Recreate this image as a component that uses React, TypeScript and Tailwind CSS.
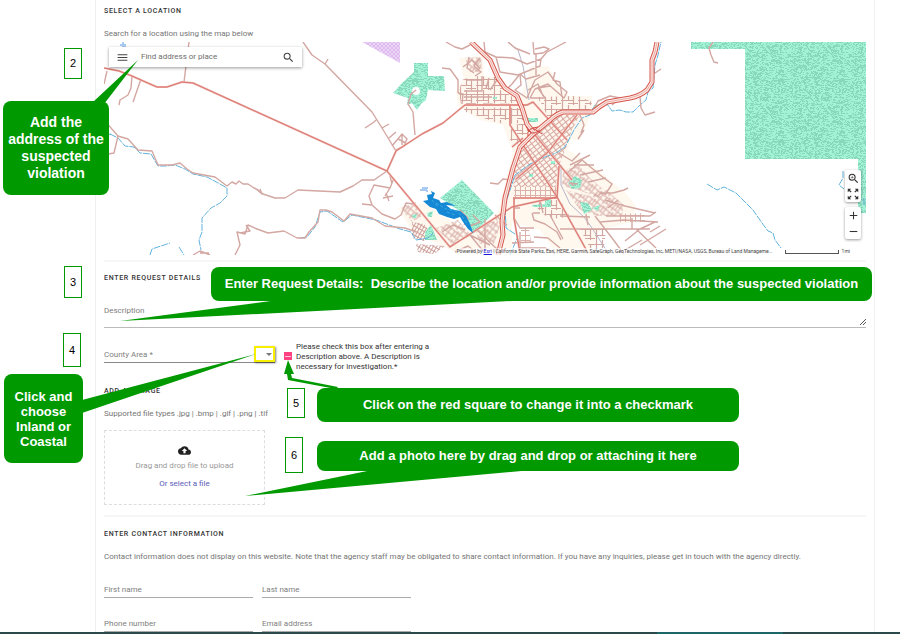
import type { ReactNode } from 'react';
import { MdAdd, MdCloudUpload, MdMenu, MdRemove, MdSearch, MdZoomIn, MdZoomOutMap } from 'react-icons/md';

// short 1px strokes scattered over a tile, used as the speckle in parks
function speckle(size: number, count: number) {
    let seed = 7;
    const next = () => {
        seed = (seed * 16807) % 2147483647;
        return seed % size;
    };
    let d = '';
    for (let i = 0; i < count; i++) {
        d += `M${next()} ${next() + 0.5}h${1 + (next() % 2)}`;
    }
    return d;
}

const cream = [
    'M459 58L483 56L484 76L496 76L503 86L520 98L527 80L530 66L548 66L558 84L569 96L592 96L592 110L588 122L580 140L570 140L568 150L582 158L600 172L625 192L636 206L632 222L600 230L590 252L555 252L540 230L512 222L512 252L455 252L462 240L480 228L498 212L506 180L513 152L508 140L503 125L480 120L458 106L456 92L464 78Z',
    'M398 208L425 203L440 215L465 228L480 238L455 252L430 240L415 236Z'
];

const districts = [
    { d: 'M462 80L473 76L495 77L503 90L520 103L461 104L459 92Z', fill: 'url(#ortho)' },
    { d: 'M462 107L524 108L529 122L510 124L498 123L478 116L466 112Z', fill: 'url(#ortho)' },
    { d: 'M465 58L481 57L482 72L470 72Z', fill: 'url(#diag)' },
    { d: 'M537 97L578 96L592 102L590 110L562 110L548 118L543 106Z', fill: 'url(#ortho)' },
    { d: 'M511 126L524 123L530 130L519 145L510 140Z', fill: 'url(#ortho)' },
    { d: 'M522 146L548 121L562 115L580 115L572 130L566 148L558 168L556 187L514 187L513 180L517 162Z', fill: 'url(#downtown)' },
    { d: 'M514 187L557 187L557 197L514 197Z', fill: 'url(#small)' },
    { d: 'M536 200L560 200L570 217L550 219L538 210Z', fill: 'url(#ortho)' },
    { d: 'M563 172L578 164L590 178L604 190L600 198L578 190L562 186Z', fill: 'url(#diag)' },
    { d: 'M566 190L590 196L606 190L624 205L622 216L598 216L580 210Z', fill: 'url(#diag)' },
    { d: 'M620 214L645 213L645 222L620 222Z', fill: 'url(#small)' },
    { d: 'M580 229L606 229L604 248L590 248Z', fill: 'url(#ortho)' },
    { d: 'M521 228L529 228L531 242L521 242Z', fill: 'url(#small)' },
    { d: 'M412 222L424 224L430 232L424 241L412 238Z', fill: 'url(#dense)' },
    { d: 'M401 206L416 202L422 216L412 222L405 214Z', fill: 'url(#diag)' },
    { d: 'M436 228L458 220L470 234L452 244Z', fill: 'url(#diag)' },
    { d: 'M476 232L496 216L500 226L494 244L480 244Z', fill: 'url(#diag)' },
    { d: 'M416 244L445 246L434 254L418 252Z', fill: 'url(#dense)' }
];

const parks = [
    'M414 63H428V76H444L445 91L428 90L426 100L421 104L417 110L412 103L407 105L408 98L393 93L402 83L414 72Z',
    'M462 180L494 213L473 234L458 210L440 198Z',
    'M691 42H866V213H858V159H745V49H691Z',
    'M568 183L575 176L582 180L580 188L572 189Z',
    'M580 202L588 203L592 210L584 214ZM592 208L600 205L598 211Z',
    'M532 205L545 204L545 199L551 199V207L533 207Z',
    'M527 118L538 118L538 122L528 122Z',
    'M425 232L431 225L437 240L425 240Z',
    'M427 213L433 211L432 217L428 217ZM412 215L417 214L416 218L413 218Z',
    'M493 97h4v2h-4ZM529 174h4v3h-4ZM551 161h4v3h-4ZM594 105l5 -1l-2 4l-4 1Z'
];

const minorRoads = [
    'M303 42L312 55L325 64L372 112L382 128L396 151M325 64L328 59M365 128L374 122L376 120M382 128L389 124M389 138L396 132M392 146L402 134L407 139L404 146L396 150M402 135V145M398 139L406 143',
    'M416 90L411 94L408 104L413 112L415 135',
    'M189 42L184 82M132 76L131 88L128 95L120 100L119 105M141 79L133 102M107 71L104 84',
    'M104 120L118 136L128 139L138 150L152 151L158 165L172 165L180 163L187 169L193 173L215 177L227 186L232 182L236 184L239 181L243 184L248 184L254 188L258 190L263 194L275 198L285 198L298 190L340 192L353 186L362 180L374 180L387 171M118 136L114 153L108 154M255 188L262 194L260 189',
    'M104 158L109 154M193 255L200 251L210 255M235 255L240 245L237 232L245 234L248 225L257 229L268 233L284 231L297 238L305 238L309 232L318 222L320 210L326 210L332 212L344 221L350 214L372 218L385 226L405 228L416 232M246 225L250 231L240 233M200 253L209 253',
    'M394 178L390 188L374 185L369 196L372 205L362 204M372 205L382 214L395 219L401 215L406 203L414 204M383 198L393 196M386 193L389 201M390 188L385 196M390 176L392 184',
    'M442 68L450 69L458 80L458 93M446 42L455 47L462 49L470 45M458 93L463 94L462 104M571 184M570 183L574 186M569 183L578 184',
    'M570 183M484 42L485 52L496 57L500 72L518 75L540 66L541 59L527 64L513 58L496 57M541 59L547 52L566 42M533 42L534 54L543 53L549 49L544 47L535 49M508 42L515 48L530 54M505 91L512 84L520 74L526 79L540 75M536 54V75',
    'M490 183L498 184L503 179L511 180',
    'M520 74L521 85L515 90L527 98L535 80L548 72L557 84L567 92L564 98L548 84L535 89L530 98M555 72L553 80L560 82L562 97M543 96L538 84L528 90M530 98H545L538 88L550 86',
    'M559 153L572 161L580 153M570 165L590 155M574 165L594 165M566 174L582 160L600 175L612 184L605 195M580 175L603 170M588 182L606 178M600 193H613L624 190L628 188M605 200L625 206L655 213M618 200L608 208',
    'M606 216H650L656 212M600 222L624 220L658 222M606 229H650M636 229L656 248M625 241L640 229L655 222M640 245L666 229M650 232L660 226M625 250L642 240M595 216L612 238L624 254M632 218V229M560 229H606M560 216L590 217M586 214L588 225',
    'M532 213L534 220L545 224L557 232L561 240M533 213H540M540 200L543 213M550 215L563 239M514 218L520 228H534M520 232V248H545L555 253M534 237L548 238L560 248M514 208H520M512 243L534 242',
    'M450 246L470 235L484 252M470 235L490 245M455 252L468 246L478 254M442 232L453 225L465 230M460 210L468 218L464 225M473 215L480 222L470 226M485 219V252M495 215L507 225M476 229L498 250',
    'M713 42L709 48L711 55L714 62L718 63M640 97L641 108L645 115L655 112M593 110L598 101L610 96L620 98L612 105M652 75L661 69M580 115L584 125L581 133M584 130L578 139',
    'M480 58L474 66L481 72L475 76M463 67L472 60L480 69M469 57L467 68L474 73M489 78L486 88M497 80L490 90M464 91H482V76M482 80H466M464 97H492'
];

const redRoads = [
    'M104 68L119 71L132 76L150 84L157 87L167 87L182 82L193 83L387 171L450 247L512 207L557 197',
    'M387 171L396 151L422 134L443 123L460 109L465 105L527 105L533 102L567 140',
    'M510 105V125L557 197L588 253',
    'M513 198H557L559 166',
    'M516 179L548 152L577 115',
    'M514 198V218L520 253',
    'M535 135L572 180M512 147L523 138'
];

const highways = [
    'M471 42L490 60L498 78L505 88L517 96L522 108L527 124L534 133',
    'M657 42L655 52L652 60V82L647 90Q640 96 630 98L607 102Q600 106 593 112H563Q556 114 550 120L533 134L520 147L513 168L505 198L502 222L503 235L498 255'
];

const streams = [
    'M110 134L118 138L125 146L134 147L140 153L151 154L158 166L166 166L175 165L185 169L193 174L207 177L220 184L227 188L227 196L220 203L211 208L202 218L202 232L199 240L201 250',
    'M150 255L152 249L170 243M179 247L184 255',
    'M104 135L112 134M300 238L307 237L315 227L320 212L327 211L343 222L352 215L376 220L400 229L411 232L416 240L428 238L433 233',
    'M510 255L518 236L506 228L505 205L515 175L530 164L545 157L556 153L565 147L574 130L582 118L590 115L593 108L607 104L612 111L620 110L626 112L633 112L640 105L646 100L648 92L653 88L655 65L658 55L661 42',
    'M707 184L717 190L724 187L736 193L753 210L762 223L768 231L773 233L775 240L781 248',
    'M843 171V178L839 185L844 189M864 198V205'
];

function MapCanvas() {
    return (
        <svg viewBox="104 42 762 213" preserveAspectRatio="xMidYMid slice" className="block h-full w-full" aria-hidden="true">
            <defs>
                <pattern id="park" width="61" height="61" patternUnits="userSpaceOnUse">
                    <rect width="61" height="61" fill="#a2f2d6" />
                    <path d={speckle(61, 1500)} stroke="#88d8bd" strokeWidth="1" />
                </pattern>
                <pattern id="reserve" width="4" height="4" patternUnits="userSpaceOnUse">
                    <rect width="4" height="4" fill="#ecd3f8" />
                    <path d="M0 0L4 4M4 0L0 4" stroke="#d9b5ea" strokeWidth="0.8" />
                </pattern>
                <pattern id="ortho" width="17" height="15" patternUnits="userSpaceOnUse">
                    <path d="M1.5 0V15M7.5 0V10M12.5 4V15M0 4.5H17M0 10.5H12M7 13.5H17" stroke="#d3a59f" strokeWidth="1.2" fill="none" />
                </pattern>
                <pattern id="diag" width="11" height="10" patternUnits="userSpaceOnUse" patternTransform="rotate(38)">
                    <path d="M1 0V10M6 2V10M0 2H11M1 7H11M9 0V7" stroke="#d3a59f" strokeWidth="1" fill="none" />
                </pattern>
                <pattern id="downtown" width="5" height="4" patternUnits="userSpaceOnUse" patternTransform="rotate(-38)">
                    <path d="M0 0.5H5M0.5 0V4" stroke="#d8aaa3" strokeWidth="1.2" fill="none" />
                </pattern>
                <pattern id="small" width="5" height="5" patternUnits="userSpaceOnUse">
                    <path d="M0 0.5H5M0.5 0V5" stroke="#dcb1aa" strokeWidth="1" fill="none" />
                </pattern>
                <pattern id="dense" width="3" height="4" patternUnits="userSpaceOnUse" patternTransform="rotate(30)">
                    <path d="M0 0.5H3M0.5 0V4" stroke="#cfa09b" strokeWidth="1" fill="none" />
                </pattern>
            </defs>

            {cream.map((d) => <path key={d} d={d} fill="#fef8ef" />)}
            <path d="M362 42H400V63Z" fill="url(#reserve)" />
            {districts.map((area) => <path key={area.d} d={area.d} fill={area.fill} />)}
            {parks.map((d) => <path key={d} d={d} fill="url(#park)" />)}
            <circle cx="416" cy="91" r="4" fill="#fff" />

            <g fill="none" strokeLinejoin="round">
                {streams.map((d) => <path key={d} d={d} stroke="#62b3dc" strokeWidth="1" strokeDasharray="7 1" />)}
                <path d="M508 42L518 50L523 66L529 100M561 165V185L570 204L584 217L592 228L608 253" stroke="#b9b5c9" strokeWidth="1" />
                {minorRoads.map((d) => <path key={d} d={d} stroke="#d3a7a2" strokeWidth="1.4" />)}
                {redRoads.map((d) => <path key={d} d={d} stroke="#eeb3ad" strokeWidth="2" />)}
                {redRoads.map((d) => <path key={d} d={d} stroke="#d9766f" strokeWidth="1" />)}
                {highways.map((d) => <path key={d} d={d} stroke="#d5554d" strokeWidth="5" />)}
                {highways.map((d) => <path key={d} d={d} stroke="#fdeae4" strokeWidth="3" />)}
                {highways.map((d) => <path key={d} d={d} stroke="#e5a09a" strokeWidth="0.8" />)}
                <path d="M526 126Q530 138 540 130M528 136Q526 128 538 127M533 128L542 134" stroke="#cf4c45" strokeWidth="1" />
            </g>

            <path d="M423 201L428 200L427 195L432 194L431 191L435 193L433 198L439 200L441 203L447 202L456 206L446 205L451 209L460 211L466 216L470 224L473 233L468 229L463 222L460 217L454 219L447 217L439 214L436 209L430 207Z" fill="#1488d4" />
            <path d="M436 203L446 209L456 211L462 216L468 225M432 200L438 207M447 212L455 215" stroke="#3ea9e2" strokeWidth="1" strokeDasharray="3 2" fill="none" />
            <path d="M420 190h7M422 188h6M426 191h2M120 45h6M122 43h2M122 47h4" stroke="#a9cbf3" strokeWidth="2" fill="none" />
        </svg>
    );
}

function MapButton({ label, children }: { label: string; children: ReactNode }) {
    return (
        <button type="button" aria-label={label} className="flex h-4 w-4 items-center justify-center text-[#333]">
            {children}
        </button>
    );
}

function LocationMap() {
    return (
        <div className="relative mt-[2px] h-[213px] overflow-hidden bg-white">
            <MapCanvas />

            <div className="absolute top-[5px] left-[5px] flex h-5 w-[193px] items-center bg-white px-[7px] shadow-[0_1px_3px_rgba(0,0,0,0.4)]">
                <button type="button" aria-label="Menu" className="text-[#444]"><MdMenu size={13} /></button>
                <input
                    type="text"
                    aria-label="Find address or place"
                    placeholder="Find address or place"
                    className="ml-3 min-w-0 flex-1 text-[8px] leading-3 placeholder:text-[#6e6e6e] focus:outline-none"
                />
                <button type="button" aria-label="Search" className="text-[#444]"><MdSearch size={13} /></button>
            </div>

            <div className="absolute top-32 right-[5px] flex flex-col gap-[5px]">
                <div className="flex flex-col rounded-xs bg-white shadow-[0_1px_3px_rgba(0,0,0,0.4)]">
                    <MapButton label="Zoom to area"><MdZoomIn size={13} /></MapButton>
                    <MapButton label="Full extent"><MdZoomOutMap size={14} /></MapButton>
                </div>
                <div className="flex flex-col rounded-xs bg-white shadow-[0_1px_3px_rgba(0,0,0,0.4)]">
                    <MapButton label="Zoom in"><MdAdd size={13} /></MapButton>
                    <MapButton label="Zoom out"><MdRemove size={13} /></MapButton>
                </div>
            </div>

            <div className="absolute right-4 bottom-0 flex items-center text-[5px] leading-[7px] text-[#444]">
                <p className="bg-white/60 whitespace-nowrap">
                    Powered by <a href="#esri" className="text-[#1a1ae0] underline">Esri</a> | California State Parks, Esri, HERE, Garmin, SafeGraph, GeoTechnologies, Inc, METI/NASA, USGS, Bureau of Land Manageme...
                </p>
                <span className="ml-3 h-1 w-[54px] border-x border-b border-[#555]" />
                <span className="ml-[3px]">1mi</span>
            </div>
        </div>
    );
}

function Heading({ children }: { children: ReactNode }) {
    return <h2 className="text-[7px] leading-3 font-medium tracking-widest text-[#333] uppercase">{children}</h2>;
}

function Note({ children }: { children: ReactNode }) {
    return <p className="mt-[11px] text-[8px] leading-3 text-[#757575]">{children}</p>;
}

function TextField({ id, label }: { id: string; label: string }) {
    return (
        <div className="relative h-5 w-[149px]">
            <input id={id} type="text" className="block h-full w-full border-b border-[#aaa] text-[8px] focus:outline-none" />
            <label htmlFor={id} className="absolute bottom-[2px] left-0 text-[8px] leading-3 text-[#808080]">{label}</label>
        </div>
    );
}

function Callout({ className, children }: { className: string; children: ReactNode }) {
    return (
        <p className={`absolute flex items-center justify-center rounded-lg bg-[#009900] text-center font-['Liberation_Sans',sans-serif] font-bold text-white ${className}`}>
            {children}
        </p>
    );
}

function StepNumber({ className, children }: { className: string; children: ReactNode }) {
    return (
        <span className={`absolute flex w-[18px] items-center justify-center border border-[#009900] bg-white font-['Liberation_Sans',sans-serif] text-[11px] text-black ${className}`}>
            {children}
        </span>
    );
}

function Annotations() {
    return (
        <div className="pointer-events-none absolute inset-0">
            <svg className="absolute inset-0 h-full w-full" fill="#009900" aria-hidden="true">
                <path d="M93 102L138 60L104 104Z" />
                <path d="M278 300L120 321L532 300Z" />
                <path d="M82 400L256 354L82 413Z" />
                <path d="M372 470L245 496L532 470Z" />
                <path d="M288 360L294 374H291L292 378L338 387L336 389L288 380L287 374H284Z" />
            </svg>

            <StepNumber className="top-12 left-16 h-[31px]">2</StepNumber>
            <StepNumber className="top-[266px] left-16 h-8">3</StepNumber>
            <StepNumber className="top-[333px] left-[63px] h-[34px]">4</StepNumber>
            <StepNumber className="top-[388px] left-[287px] h-[30px]">5</StepNumber>
            <StepNumber className="top-[437px] left-[285px] h-9">6</StepNumber>

            <Callout className="top-[101px] left-[3px] h-[94px] w-[106px] text-[14px] leading-[17px]">
                Add the<br />address of the<br />suspected<br />violation
            </Callout>
            <Callout className="top-[267px] right-7 left-[211px] h-[34px] text-[13px] whitespace-pre">
                {'Enter Request Details:  Describe the location and/or provide information about the suspected violation'}
            </Callout>
            <Callout className="top-[374px] left-[4px] h-[89px] w-[79px] text-[13px] leading-[15px]">
                Click and<br />choose<br />Inland or<br />Coastal
            </Callout>
            <Callout className="top-[388px] left-[317px] h-[34px] w-[422px] text-[13px]">
                Click on the red square to change it into a checkmark
            </Callout>
            <Callout className="top-[441px] left-[317px] h-[30px] w-[422px] text-[13px]">
                Add a photo here by drag and drop or attaching it here
            </Callout>
        </div>
    );
}

export default function App() {
    return (
        <div className="relative overflow-hidden bg-white font-[Roboto,sans-serif]">
            <main className="mr-[25px] ml-[95px] border-x border-[#f0f0f0] px-2 pt-[5px]">
                <section>
                    <Heading>Select a location</Heading>
                    <Note>Search for a location using the map below</Note>
                    <LocationMap />
                </section>

                <section className="mt-[5px] border-t-2 border-[#f6f6f6] pt-[10px]">
                    <Heading>Enter request details</Heading>
                    <div className="relative mt-[10px] h-[34px]">
                        <textarea id="description" className="block h-full w-full resize-none border-b border-[#bbb] text-[8px] focus:outline-none" />
                        <label htmlFor="description" className="absolute top-[11px] left-0 text-[8px] leading-3 text-[#808080]">Description</label>
                        <svg width="6" height="6" className="absolute right-0 bottom-[3px]" stroke="#555" aria-hidden="true">
                            <path d="M0 6L6 0M3 6L6 3" />
                        </svg>
                    </div>

                    <div className="mt-[14px] flex h-[31px]">
                        <div className="relative h-[21px] w-[171px]">
                            <select id="county" className="block h-full w-full appearance-none border-b border-[#888] text-[8px] focus:outline-none" defaultValue="">
                                <option value="" aria-label="None" />
                                <option value="inland">Inland</option>
                                <option value="coastal">Coastal</option>
                            </select>
                            <label htmlFor="county" className="absolute bottom-[2px] left-0 text-[8px] leading-3 text-[#808080]">County Area *</label>
                            <span className="pointer-events-none absolute right-0 bottom-[1px] flex h-4 w-[21px] items-center justify-end border-2 border-[#f7f000] pr-px shadow-[1px_1px_2px_rgba(0,0,0,0.5)]">
                                <svg width="6" height="3" fill="#777" aria-hidden="true"><path d="M0 0H6L3 3Z" /></svg>
                            </span>
                        </div>
                        <input
                            id="confirm"
                            type="checkbox"
                            className="mt-[10px] ml-[9px] flex h-2 w-2 shrink-0 appearance-none items-center justify-center bg-[#ff4081] before:h-px before:w-[6px] before:bg-white/70"
                        />
                        <label htmlFor="confirm" className="ml-1 w-[150px] text-[8px] leading-[10px] text-[#333]">
                            Please check this box after entering a Description above. A Description is necessary for investigation.*
                        </label>
                    </div>
                </section>

                <section className="mt-3">
                    <Heading>Add an image</Heading>
                    <Note>Supported file types .jpg | .bmp | .gif | .png | .tif</Note>
                    <div className="mt-[10px] flex h-[75px] w-[161px] flex-col items-center border border-dashed border-[#ddd] pt-[13px] text-[8px] leading-3">
                        <MdCloudUpload size={13} className="text-[#222]" />
                        <p className="mt-[3px] text-[#999]">Drag and drop file to upload</p>
                        <button type="button" className="mt-[6px] text-[#5c5cb8]">Or select a file</button>
                    </div>
                </section>

                <section className="mt-[10px] border-t-2 border-[#f6f6f6] pt-[11px]">
                    <Heading>Enter contact information</Heading>
                    <Note>
                        Contact information does not display on this website. Note that the agency staff may be obligated to share contact information. If you have any inquiries, please get in touch with the agency directly.
                    </Note>
                    <div className="mt-[15px] flex flex-wrap gap-x-[9px]">
                        <TextField id="first" label="First name" />
                        <TextField id="last" label="Last name" />
                    </div>
                    <div className="mt-[14px] flex flex-wrap gap-x-[9px]">
                        <TextField id="phone" label="Phone number" />
                        <TextField id="email" label="Email address" />
                    </div>
                </section>
            </main>
            <div className="flex h-[2px] bg-[#2c4a4c]">
                <span className="ml-[73%] w-[14%] bg-[#1b6666]" />
            </div>
            <Annotations />
        </div>
    );
}
